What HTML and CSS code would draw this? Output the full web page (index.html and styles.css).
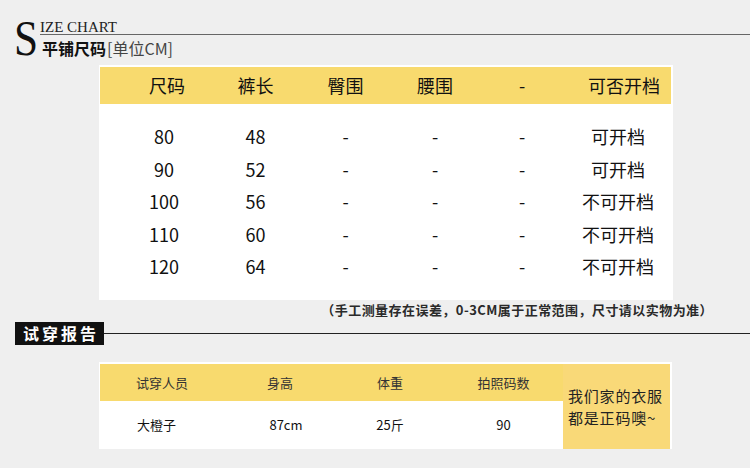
FILE: index.html
```html
<!DOCTYPE html>
<html lang="zh">
<head>
<meta charset="utf-8">
<link rel="stylesheet" href="styles.css">
</head>
<body>
<header class="brand">
  <div class="brand-s">S</div>
  <div class="brand-text">
    <div class="brand-en">IZE CHART</div>
    <div class="brand-rule"></div>
    <div class="brand-cn"><b>平铺尺码</b><span class="unit">[单位CM]</span></div>
  </div>
</header>

<section class="size-panel">
  <div class="size-head">
    <div>尺码</div><div>裤长</div><div>臀围</div><div>腰围</div><div>-</div><div class="head-last">可否开档</div>
  </div>
  <div class="size-body">
    <div class="num">80</div><div>48</div><div>-</div><div>-</div><div>-</div><div>可开档</div>
    <div class="num">90</div><div>52</div><div>-</div><div>-</div><div>-</div><div>可开档</div>
    <div class="num">100</div><div>56</div><div>-</div><div>-</div><div>-</div><div>不可开档</div>
    <div class="num">110</div><div>60</div><div>-</div><div>-</div><div>-</div><div>不可开档</div>
    <div class="num">120</div><div>64</div><div>-</div><div>-</div><div>-</div><div>不可开档</div>
  </div>
</section>

<p class="note">（手工测量存在误差，0-3CM属于正常范围，尺寸请以实物为准）</p>

<div class="report-title">
  <span class="report-label">试穿报告</span>
  <span class="report-rule"></span>
</div>

<section class="report-panel">
  <div class="report-table">
    <div class="report-head">
      <div>试穿人员</div><div>身高</div><div>体重</div><div>拍照码数</div>
    </div>
    <div class="report-row">
      <div class="cell-name">大橙子</div><div class="cell-height">87cm</div><div>25斤</div><div>90</div>
    </div>
  </div>
  <div class="report-side">
    <span class="side-line">我们家的衣服</span>
    <span class="side-line">都是正码噢~</span>
  </div>
</section>
</body>
</html>
```

FILE: styles.css
```css
* { box-sizing: border-box; }

body {
  margin: 0;
  background: #efefef;
  font-family: "Noto Sans CJK SC", "Noto Sans", sans-serif;
  color: #111;
  width: 750px;
  height: 468px;
  overflow: hidden;
}

.brand {
  display: flex;
  align-items: flex-start;
  height: 65px;
  padding-left: 14px;
  padding-top: 13px;
}

.brand-s {
  font-family: "Liberation Serif", serif;
  font-size: 51px;
  line-height: 50px;
  color: #111;
  width: 26px;
  transform: scaleX(0.85);
  transform-origin: left center;
}

.brand-text {
  flex: 1;
  display: flex;
  flex-direction: column;
}

.brand-en {
  font-family: "Liberation Serif", serif;
  font-size: 15px;
  line-height: 14px;
  color: #222;
  height: 21px;
  padding-top: 7px;
  overflow: hidden;
}

.brand-rule {
  height: 1px;
  background: #666;
}

.brand-cn {
  font-size: 16px;
  line-height: 20px;
  margin-top: 3px;
  padding-left: 2px;
  color: #111;
}

.brand-cn b { font-weight: 700; }

.unit {
  color: #444;
  font-weight: 400;
  margin-left: 1px;
}

.size-panel {
  margin-left: 99px;
  width: 574px;
  height: 235px;
  background: #fff;
  padding: 2px 2px 0 1px;
}

.size-head,
.size-body {
  display: grid;
  grid-template-columns: 88px 89px 91px 88px 86px 106px;
  padding-left: 23px;
  font-size: 18px;
  text-align: center;
}

.size-head {
  background: #f8da6e;
  height: 37px;
  align-items: center;
  line-height: 37px;
}

.head-last {
  text-align: right;
  padding-right: 11px;
}

.size-body {
  padding-top: 16px;
  grid-auto-rows: 32.5px;
  align-items: center;
  line-height: 24px;
}

.size-body .num { padding-right: 6px; }

.note {
  margin: 0;
  height: 20px;
  font-size: 13px;
  line-height: 20px;
  font-weight: 700;
  letter-spacing: 0.45px;
  color: #2a2a2a;
  text-align: right;
  padding-right: 37px;
}

.report-title {
  display: flex;
  align-items: center;
  margin-top: 2px;
  padding-left: 15px;
  height: 23px;
}

.report-label {
  background: #111;
  color: #fff;
  font-weight: 700;
  font-size: 16px;
  letter-spacing: 3px;
  height: 23px;
  line-height: 23px;
  width: 89px;
  padding-left: 8px;
}

.report-rule {
  flex: 1;
  height: 1px;
  background: #222;
}

.report-panel {
  display: flex;
  margin-top: 17px;
  margin-left: 99px;
  width: 573px;
  background: #fff;
  padding: 2px 2px 0 1px;
}

.report-table {
  width: 463px;
  font-size: 13px;
}

.report-head,
.report-row {
  display: grid;
  grid-template-columns: 124px 112px 108px 119px;
  text-align: center;
  align-items: center;
}

.report-head {
  background: #f8da6e;
  height: 37px;
  color: #333;
}

.report-row {
  height: 46px;
  color: #111;
}

.cell-name {
  text-align: left;
  padding-left: 37px;
}

.cell-height { padding-left: 12px; }

.report-side {
  width: 107px;
  height: 85px;
  background: #f9d978;
  font-size: 15px;
  letter-spacing: 0.8px;
  padding-left: 5px;
  display: flex;
  flex-direction: column;
  justify-content: center;
  color: #222;
  white-space: nowrap;
}

.side-line {
  display: block;
  height: 22px;
  line-height: 22px;
}
```
